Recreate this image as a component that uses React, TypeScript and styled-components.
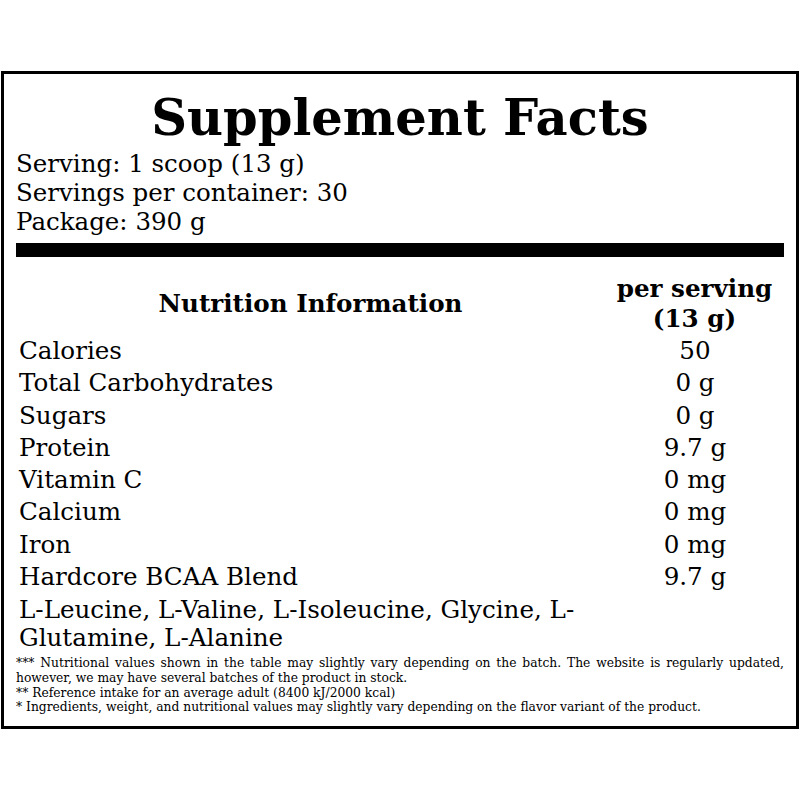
import React from "react";
import styled, { createGlobalStyle } from "styled-components";

const Global = createGlobalStyle`
  html, body { margin: 0; padding: 0; background: #fff; }
  body { font-family: "DejaVu Serif", serif; color: #000; }
`;

const Page = styled.div`
  width: 800px;
  height: 800px;
  padding-top: 71px;
  box-sizing: border-box;
`;

const Box = styled.div`
  margin: 0 1px;
  border: 3px solid #000;
  padding: 0 12px 10px 12px;
  box-sizing: border-box;
  height: 658px;
`;

const Title = styled.h1`
  margin: 0;
  padding-top: 13px;
  font-size: 49.6px;
  font-weight: bold;
  text-align: center;
  line-height: 62px;
`;

const InfoLine = styled.div`
  font-size: 24.5px;
  line-height: 29px;
`;

const Bar = styled.div`
  height: 14px;
  background: #000;
  margin-top: 7px;
`;

const Table = styled.table`
  width: 100%;
  border-collapse: collapse;
  margin-top: 17px;
`;

const Th = styled.th<{ $w?: string }>`
  font-size: 24.6px;
  font-weight: bold;
  line-height: 30px;
  text-align: center;
  padding: 0 2px 1px;
  width: ${(p) => p.$w || "auto"};
`;

const Td = styled.td<{ $center?: boolean }>`
  font-size: 24.6px;
  line-height: 32.3px;
  padding: 0 2px 0 3px;
  text-align: ${(p) => (p.$center ? "center" : "left")};
  vertical-align: top;
  white-space: nowrap;
`;

const Ingredients = styled.td`
  font-size: 24.6px;
  line-height: 28px;
  padding: 3px 2px 0 3px;
`;

const Notes = styled.div`
  font-size: 12.3px;
  line-height: 14.6px;
  margin-top: 4px;
`;

const Note = styled.p<{ $justify?: boolean }>`
  margin: 0;
  text-align: ${(p) => (p.$justify ? "justify" : "left")};
`;

const rows: [string, string][] = [
  ["Calories", "50"],
  ["Total Carbohydrates", "0 g"],
  ["Sugars", "0 g"],
  ["Protein", "9.7 g"],
  ["Vitamin C", "0 mg"],
  ["Calcium", "0 mg"],
  ["Iron", "0 mg"],
  ["Hardcore BCAA Blend", "9.7 g"],
];

export default function App() {
  return (
    <>
      <Global />
      <Page>
        <Box>
          <Title>Supplement Facts</Title>
          <InfoLine>Serving: 1 scoop (13 g)</InfoLine>
          <InfoLine>Servings per container: 30</InfoLine>
          <InfoLine>Package: 390 g</InfoLine>
          <Bar />
          <Table>
            <thead>
              <tr>
                <Th $w="585px">Nutrition Information</Th>
                <Th>
                  per serving
                  <br />
                  (13 g)
                </Th>
              </tr>
            </thead>
            <tbody>
              {rows.map(([n, v]) => (
                <tr key={n}>
                  <Td>{n}</Td>
                  <Td $center>{v}</Td>
                </tr>
              ))}
              <tr>
                <Ingredients>
                  L-Leucine, L-Valine, L-Isoleucine, Glycine, L-Glutamine, L-Alanine
                </Ingredients>
                <Td />
              </tr>
            </tbody>
          </Table>
          <Notes>
            <Note $justify>
              *** Nutritional values shown in the table may slightly vary depending on the batch. The website is
              regularly updated, however, we may have several batches of the product in stock.
            </Note>
            <Note>** Reference intake for an average adult (8400 kJ/2000 kcal)</Note>
            <Note>
              * Ingredients, weight, and nutritional values may slightly vary depending on the flavor variant of the
              product.
            </Note>
          </Notes>
        </Box>
      </Page>
    </>
  );
}
